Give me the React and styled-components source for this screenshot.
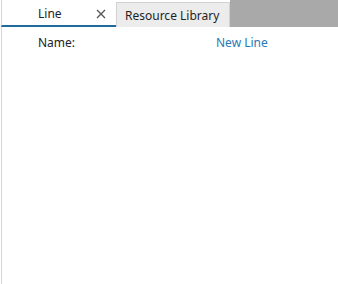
import React from "react";
import styled, { createGlobalStyle } from "styled-components";

const Global = createGlobalStyle`
  html, body { margin: 0; padding: 0; background: #fff; }
  body { font-family: "Noto Sans", "Open Sans", sans-serif; }
`;

const Page = styled.div`
  width: 338px;
  height: 284px;
  box-sizing: border-box;
  display: flex;
  flex-direction: column;
  overflow: hidden;
`;

const TabBar = styled.div`
  display: flex;
  height: 27px;
  flex: none;
`;

const ActiveTab = styled.div`
  width: 115px;
  box-sizing: border-box;
  background: #fff;
  border-left: 1px solid #d6d6d6;
  margin-left: 1px;
  border-bottom: 2px solid #1e6b9c;
  display: flex;
  align-items: center;
  padding-left: 36px;
  padding-right: 10px;
  font-size: 12px;
  color: #222;
`;

const TabLabel = styled.span`
  flex: 1;
  line-height: 1;
  padding-top: 2px;
`;

const Close = styled.span`
  width: 10px;
  height: 10px;
  display: flex;
  margin-top: 2px;
`;

const TabSlot = styled.div`
  width: 114px;
  padding-top: 2px;
  background: #fff;
  box-sizing: border-box;
  display: flex;
`;

const InactiveTab = styled.div`
  flex: 1;
  background: #ececec;
  border: 1px solid #d2d2d2;
  border-bottom: none;
  display: flex;
  align-items: center;
  padding-left: 8px;
  font-size: 12px;
  color: #1f1f1f;
  white-space: nowrap;
`;

const Filler = styled.div`
  flex: 1;
  background: #a9a9a9;
`;

const Body = styled.div`
  flex: 1;
  margin-left: 1px;
  border-left: 1px solid #d6d6d6;
  padding: 8px 0 0 36px;
`;

const Row = styled.div`
  display: grid;
  grid-template-columns: 178px 1fr;
  font-size: 12px;
  line-height: 16px;
`;

const Label = styled.span`
  color: #222;
`;

const Value = styled.span`
  color: ${(p) => p.$color || "#2b78b5"};
`;

export default function App() {
  return (
    <>
      <Global />
      <Page>
        <TabBar>
          <ActiveTab>
            <TabLabel>Line</TabLabel>
            <Close>
              <svg width="10" height="10" viewBox="0 0 10 10">
                <path d="M1 1 L9 9 M9 1 L1 9" stroke="#555" strokeWidth="1.3" fill="none" />
              </svg>
            </Close>
          </ActiveTab>
          <TabSlot>
            <InactiveTab>Resource Library</InactiveTab>
          </TabSlot>
          <Filler />
        </TabBar>
        <Body>
          <Row>
            <Label>Name:</Label>
            <Value>New Line</Value>
          </Row>
        </Body>
      </Page>
    </>
  );
}
